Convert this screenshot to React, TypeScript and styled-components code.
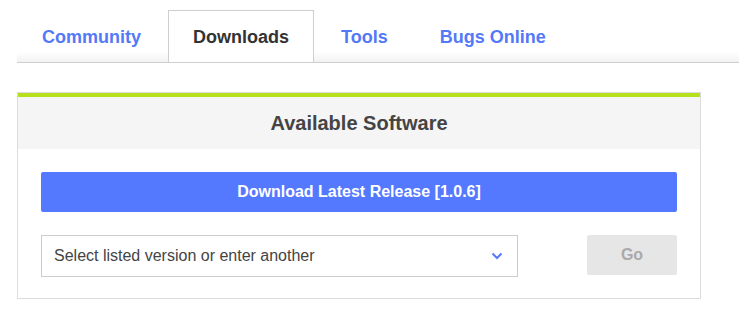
import React, { useState } from 'react';
import styled, { createGlobalStyle } from 'styled-components';

const GlobalStyle = createGlobalStyle`
  body {
    margin: 0;
    background: #fff;
    font-family: 'Liberation Sans', Arial, sans-serif;
  }
`;

const Page = styled.div`
  padding: 10px 0 0 17px;
`;

const TabBar = styled.div`
  display: flex;
  gap: 2px;
  height: 52px;
  border-bottom: 1px solid #cfcfcf;
  background: linear-gradient(to bottom, #fff 0%, #fff 80%, #f2f2f2 100%);
`;

const Tab = styled.div<{ $active?: boolean }>`
  display: flex;
  align-items: center;
  padding: 1px 24px 0;
  margin-bottom: -1px;
  font-size: 18px;
  font-weight: bold;
  color: ${(p) => (p.$active ? '#333' : '#5479f7')};
  background: ${(p) => (p.$active ? '#fff' : 'transparent')};
  border: 1px solid ${(p) => (p.$active ? '#cfcfcf' : 'transparent')};
  cursor: pointer;
`;

const Panel = styled.div`
  width: 682px;
  margin-top: 29px;
  border: 1px solid #dcdcdc;
`;

const PanelHeader = styled.div`
  border-top: 4px solid #b6df1c;
  background: #f5f5f5;
  height: 52px;
  display: flex;
  align-items: center;
  justify-content: center;
  font-size: 20px;
  font-weight: bold;
  color: #444;
`;

const PanelBody = styled.div`
  padding: 23px 23px 21px 23px;
  display: flex;
  flex-direction: column;
  gap: 23px;
`;

const PrimaryButton = styled.button`
  height: 40px;
  border: none;
  border-radius: 2px;
  background: #5479ff;
  color: #fff;
  font-family: inherit;
  font-size: 16px;
  font-weight: bold;
  cursor: pointer;
`;

const Row = styled.div`
  display: flex;
  justify-content: space-between;
  align-items: flex-start;
`;

const SelectBox = styled.div`
  box-sizing: border-box;
  width: 477px;
  height: 42px;
  border: 1px solid #cccccc;
  display: flex;
  align-items: center;
  justify-content: space-between;
  padding: 0 14px 0 12px;
  font-size: 16px;
  color: #444;
`;

const GoButton = styled.button`
  width: 90px;
  height: 40px;
  border: none;
  border-radius: 2px;
  background: #e6e6e6;
  color: #aaa;
  font-family: inherit;
  font-size: 16px;
  font-weight: bold;
`;

const tabs = ['Community', 'Downloads', 'Tools', 'Bugs Online'];

export default function App() {
  const [active, setActive] = useState('Downloads');
  return (
    <>
      <GlobalStyle />
      <Page>
        <TabBar>
          {tabs.map((t) => (
            <Tab key={t} $active={t === active} onClick={() => setActive(t)}>
              {t}
            </Tab>
          ))}
        </TabBar>
        <Panel>
          <PanelHeader>Available Software</PanelHeader>
          <PanelBody>
            <PrimaryButton>Download Latest Release [1.0.6]</PrimaryButton>
            <Row>
              <SelectBox>
                <span>Select listed version or enter another</span>
                <svg width="12" height="8" viewBox="0 0 12 8">
                  <polyline points="1.5,1.5 6,6 10.5,1.5" fill="none" stroke="#5479ff" strokeWidth="2" />
                </svg>
              </SelectBox>
              <GoButton disabled>Go</GoButton>
            </Row>
          </PanelBody>
        </Panel>
      </Page>
    </>
  );
}
